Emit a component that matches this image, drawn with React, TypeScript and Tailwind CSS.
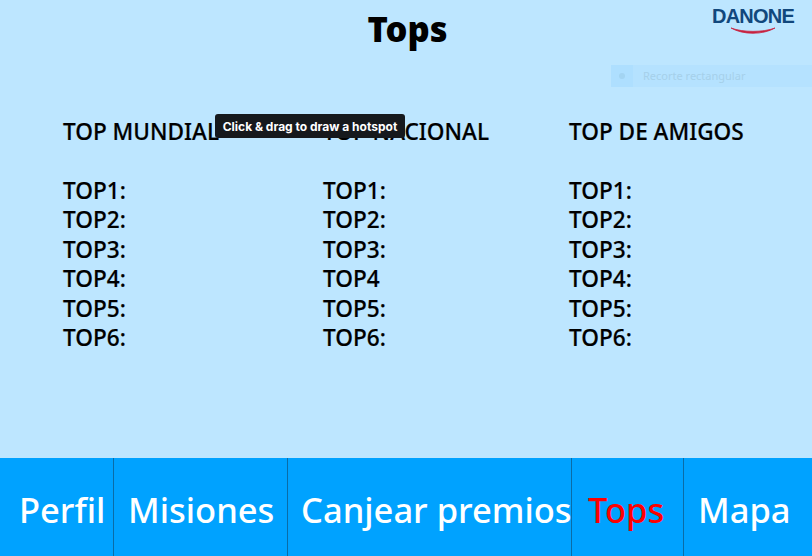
const columns = [
  { title: "TOP MUNDIAL", width: "w-[260px]", rows: ["TOP1:", "TOP2:", "TOP3:", "TOP4:", "TOP5:", "TOP6:"] },
  { title: "TOP NACIONAL", width: "w-[246px]", rows: ["TOP1:", "TOP2:", "TOP3:", "TOP4", "TOP5:", "TOP6:"] },
  { title: "TOP DE AMIGOS", width: "w-[243px]", rows: ["TOP1:", "TOP2:", "TOP3:", "TOP4:", "TOP5:", "TOP6:"] },
];

const tabs = [
  { label: "Perfil", width: "w-[114px]", pad: "pl-[19px]", color: "text-white" },
  { label: "Misiones", width: "w-[174px]", pad: "pl-[14px]", color: "text-white" },
  { label: "Canjear premios", width: "w-[284px]", pad: "pl-[13px]", color: "text-white" },
  { label: "Tops", width: "w-[112px]", pad: "pl-[16px]", color: "text-[#ff0000]" },
  { label: "Mapa", width: "w-[128px]", pad: "pl-[14px]", color: "text-white" },
];

const App = () => {
  return (
    <div className="relative flex h-[556px] w-[812px] flex-col overflow-hidden bg-[#bde6ff] font-['Noto_Sans','Open_Sans',sans-serif]">
      {/* Header */}
      <h1 className="mt-[7px] pl-[3px] text-center text-[34.5px] leading-[44px] font-black text-black">Tops</h1>

      {/* Danone logo */}
      <div className="absolute top-[5px] left-[711px] flex w-[84px] flex-col items-center">
        <span className="font-['Liberation_Sans',sans-serif] text-[20px] leading-[22px] font-bold tracking-[-0.8px] text-[#11477c]">DANONE</span>
        <svg width="46" height="9" viewBox="0 0 46 9" className="-mt-[0.5px]">
          <path d="M1 1 C13 8 33 8 45 1 C33 5.5 13 5.5 1 1 Z" fill="#c8213f" stroke="#c8213f" strokeWidth="0.8" />
        </svg>
      </div>

      {/* Faded snipping tool label */}
      <div className="absolute top-[65px] left-[611px] flex h-[22px] w-[201px] items-center bg-[#b5e2ff]">
        <div className="flex h-[22px] w-[22px] items-center justify-center bg-[#aedfff]">
          <div className="h-[6px] w-[6px] rounded-full bg-[#a3d4f2]" />
        </div>
        <span className="ml-[10px] text-[11px] text-[#a5d0ea]">Recorte rectangular</span>
      </div>

      {/* Rankings */}
      <div className="mt-[66px] flex flex-1 pl-[63px] text-black">
        {columns.map((col) => (
          <div key={col.title} className={col.width}>
            <h2 className="text-[22.6px] leading-[30px] font-medium whitespace-nowrap [-webkit-text-stroke:0.2px_black]">{col.title}</h2>
            <ul className="mt-[28.5px]">
              {col.rows.map((row) => (
                <li key={row} className="text-[22.6px] leading-[29.5px] font-medium [-webkit-text-stroke:0.2px_black]">{row}</li>
              ))}
            </ul>
          </div>
        ))}
      </div>

      {/* Tooltip */}
      <div className="absolute top-[114px] left-[215px] flex h-[24px] w-[190px] items-center justify-center rounded-[3px] bg-[#16191d] pt-[1px] font-['Inter',sans-serif] text-[12px] font-bold whitespace-nowrap text-white">
        Click &amp; drag to draw a hotspot
      </div>

      {/* Bottom nav */}
      <nav className="flex h-[98px] bg-[#00a2ff]">
        {tabs.map((tab, i) => (
          <div
            key={tab.label}
            className={`flex h-full items-center whitespace-nowrap ${tab.width} ${tab.pad} ${i < tabs.length - 1 ? "border-r border-[#0a6ca6]" : ""}`}
          >
            <span className={`pt-[6px] text-[34.5px] leading-none font-medium ${tab.color}`}>{tab.label}</span>
          </div>
        ))}
      </nav>
    </div>
  );
};

export default App;
